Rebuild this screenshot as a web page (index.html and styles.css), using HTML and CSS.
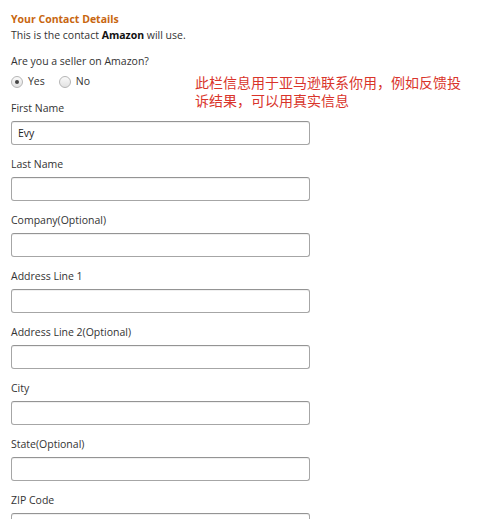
FILE: index.html
```html
<!DOCTYPE html>
<html>
<head>
<meta charset="utf-8">
<link rel="stylesheet" href="styles.css">
</head>
<body>
<div class="page">
  <div class="form">
    <h2 class="title">Your Contact Details</h2>
    <p class="sub">This is the contact <b>Amazon</b> will use.</p>
    <p class="question">Are you a seller on Amazon?</p>
    <div class="radios">
      <label class="radio"><span class="dot on"></span>Yes</label>
      <label class="radio"><span class="dot"></span>No</label>
    </div>
    <div class="field"><div class="label">First Name</div><div class="input">Evy</div></div>
    <div class="field"><div class="label">Last Name</div><div class="input"></div></div>
    <div class="field"><div class="label">Company(Optional)</div><div class="input"></div></div>
    <div class="field"><div class="label">Address Line 1</div><div class="input"></div></div>
    <div class="field"><div class="label">Address Line 2(Optional)</div><div class="input"></div></div>
    <div class="field"><div class="label">City</div><div class="input"></div></div>
    <div class="field"><div class="label">State(Optional)</div><div class="input"></div></div>
    <div class="field"><div class="label">ZIP Code</div><div class="input"></div></div>
  </div>
  <div class="note">此栏信息用于亚马逊联系你用，例如反馈投诉结果，可以用真实信息</div>
</div>
</body>
</html>
```
FILE: styles.css
```css
html, body {
  margin: 0;
  padding: 0;
  background: #fff;
  overflow: hidden;
}
.page {
  display: flex;
  height: 519px;
  overflow: hidden;
  font-family: "Open Sans", "Noto Sans", sans-serif;
  color: #333;
}
.form {
  width: 300px;
  padding: 11px 0 0 11px;
  flex: none;
}
.title {
  margin: 0;
  font-size: 10.5px;
  line-height: 16px;
  font-weight: 700;
  color: #c8660f;
}
.sub {
  margin: 0;
  font-size: 10.5px;
  line-height: 16px;
}
.sub b { font-weight: 700; color: #111; }
.question {
  margin: 10px 0 0;
  font-size: 10.5px;
  line-height: 16px;
}
.radios {
  display: flex;
  gap: 14px;
  margin-top: 4px;
  height: 16px;
  align-items: center;
  font-size: 10.5px;
}
.radio {
  display: flex;
  align-items: center;
  gap: 5px;
}
.dot {
  width: 10px;
  height: 10px;
  border-radius: 50%;
  border: 1px solid #b5b5b5;
  background: linear-gradient(#fafafa, #e2e2e2);
  box-sizing: content-box;
  display: flex;
  align-items: center;
  justify-content: center;
  margin-top: 2px;
}
.dot.on::after {
  content: "";
  width: 4px;
  height: 4px;
  border-radius: 50%;
  background: #444;
}
.field {
  margin-top: 10px;
}
.label {
  font-size: 10.5px;
  line-height: 16px;
  margin-bottom: 6px;
  position: relative;
  top: 1px;
}
.input {
  box-sizing: border-box;
  width: 299px;
  height: 24px;
  border: 1px solid #a6a6a6;
  border-top-color: #949494;
  border-radius: 3px;
  box-shadow: inset 0 1px 0 rgba(0,0,0,0.06);
  font-size: 10.5px;
  line-height: 22px;
  padding-left: 6px;
  background: #fff;
  color: #222;
}
.note {
  margin: 73px 0 0 -116px;
  width: 270px;
  font-family: "Noto Sans CJK SC", sans-serif;
  font-size: 14px;
  line-height: 18px;
  color: #d9342b;
  height: 36px;
}
```
